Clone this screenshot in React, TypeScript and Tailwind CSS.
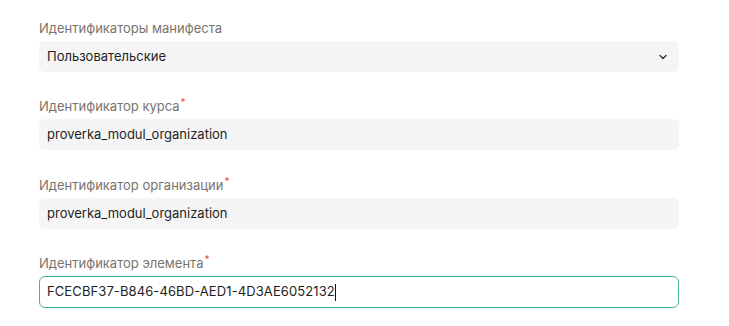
import React from "react";

function Label({ text, required }: { text: string; required?: boolean }) {
  return (
    <div className="h-[20px] flex items-center text-[13px] leading-[20px] text-[#7a736d]">
      <span>{text}</span>
      {required && <span className="text-[#e5484d] text-[10px] leading-none self-start mt-[1px] ml-[1px]">*</span>}
    </div>
  );
}

function Box({ children }: { children: React.ReactNode }) {
  return (
    <div className="mt-[3px] h-[31px] rounded-[6px] bg-[#f5f5f5] flex items-center px-[8px] text-[13px] text-[#1f1f1f]">
      {children}
    </div>
  );
}

export default function App() {
  return (
    <div className="w-[729px] h-[326px] bg-white pt-[18px] pl-[39px]" style={{ fontFamily: "Inter, 'Noto Sans', sans-serif" }}>
      <div className="w-[640px] flex flex-col">
        <div>
          <Label text="Идентификаторы манифеста" />
          <Box>
            <span className="flex-1">Пользовательские</span>
            <svg width="10" height="10" viewBox="0 0 10 10" className="mr-[3px]">
              <path d="M2 3.5 L5 6.5 L8 3.5" fill="none" stroke="#333" strokeWidth="1.4" strokeLinecap="round" strokeLinejoin="round" />
            </svg>
          </Box>
        </div>
        <div className="mt-[24px]">
          <Label text="Идентификатор курса" required />
          <Box>proverka_modul_organization</Box>
        </div>
        <div className="mt-[25px]">
          <Label text="Идентификатор организации" required />
          <Box>proverka_modul_organization</Box>
        </div>
        <div className="mt-[24px]">
          <Label text="Идентификатор элемента" required />
          <div className="mt-[3px] h-[32px] rounded-[6px] bg-white border border-[#45b68c] flex items-center px-[7px] text-[13px] text-[#1f1f1f] tracking-[0.1px]">
            <span>FCECBF37-B846-46BD-AED1-4D3AE6052132</span>
            <span className="inline-block w-[1px] h-[17px] bg-[#111]"></span>
          </div>
        </div>
      </div>
    </div>
  );
}
